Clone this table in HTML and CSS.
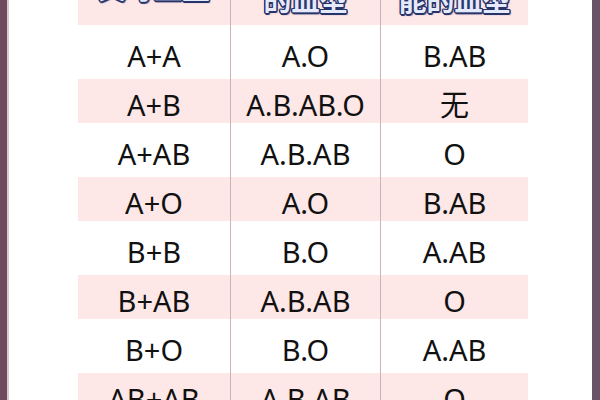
FILE: index.html
```html
<!DOCTYPE html>
<html lang="zh">
<head>
<meta charset="utf-8">
<title>父母血型与子女血型对照表</title>
<link rel="stylesheet" href="styles.css">
</head>
<body>
<div class="edge-l"></div>
<main class="page">
  <div class="table">
    <div class="col c1">
      <div class="cell head h1">父母血型</div>
      <div class="cell">A+A</div>
      <div class="cell pink">A+B</div>
      <div class="cell">A+AB</div>
      <div class="cell pink">A+O</div>
      <div class="cell">B+B</div>
      <div class="cell pink">B+AB</div>
      <div class="cell">B+O</div>
      <div class="cell pink">AB+AB</div>
    </div>
    <div class="col c2">
      <div class="cell head">子女可能<br>的血型</div>
      <div class="cell">A.O</div>
      <div class="cell pink">A.B.AB.O</div>
      <div class="cell">A.B.AB</div>
      <div class="cell pink">A.O</div>
      <div class="cell">B.O</div>
      <div class="cell pink">A.B.AB</div>
      <div class="cell">B.O</div>
      <div class="cell pink">A.B.AB</div>
    </div>
    <div class="col c3">
      <div class="cell head">子女不可<br>能的血型</div>
      <div class="cell">B.AB</div>
      <div class="cell pink">无</div>
      <div class="cell">O</div>
      <div class="cell pink">B.AB</div>
      <div class="cell">A.AB</div>
      <div class="cell pink">O</div>
      <div class="cell">A.AB</div>
      <div class="cell pink">O</div>
    </div>
  </div>
</main>
<div class="edge-r"></div>
</body>
</html>
```
FILE: styles.css
```css
html, body {
  margin: 0;
  padding: 0;
}
body {
  width: 600px;
  height: 400px;
  overflow: hidden;
  display: flex;
  background: #ffffff;
}
.edge-l {
  width: 7px;
  flex: none;
  background: #6d4a5e;
  border-right: 2px solid #dcc6cf;
}
.edge-r {
  width: 8px;
  flex: none;
  background: #6b5367;
}
.page {
  flex: 1;
  padding-left: 69px;
  overflow: hidden;
}
.table {
  display: flex;
  margin-top: -49px;
}
.col {
  display: flex;
  flex-direction: column;
  gap: 5px;
}
.c1 {
  width: 152px;
}
.c2 {
  width: 149px;
  border-left: 1px solid #cfb1ba;
}
.c3 {
  width: 147px;
  border-left: 1px solid #cfb1ba;
}
.cell {
  height: 44px;
  flex: none;
  display: flex;
  align-items: center;
  justify-content: center;
  padding-top: 6px;
  box-sizing: border-box;
  font-family: "Noto Sans", "Open Sans", "Noto Sans CJK SC", sans-serif;
  font-size: 29px;
  line-height: 1;
  color: #111111;
  white-space: nowrap;
}
.pink {
  background: #fde7e7;
}
.head {
  height: 74px;
  background: #fde7e7;
  align-items: flex-end;
  text-align: center;
  padding: 0 0 9px;
  font-family: "Noto Sans CJK SC", sans-serif;
  font-weight: 700;
  font-size: 28px;
  line-height: 34px;
  color: #e4eafb;
  text-shadow:
    1.5px 0 0 #27346a, -1.5px 0 0 #27346a, 0 1.5px 0 #27346a, 0 -1.5px 0 #27346a,
    1px 1px 0 #27346a, -1px -1px 0 #27346a, 1px -1px 0 #27346a, -1px 1px 0 #27346a,
    1.5px 2px 1px rgba(39, 52, 106, 0.6);
}
.h1 {
  padding-bottom: 21px;
}
```
